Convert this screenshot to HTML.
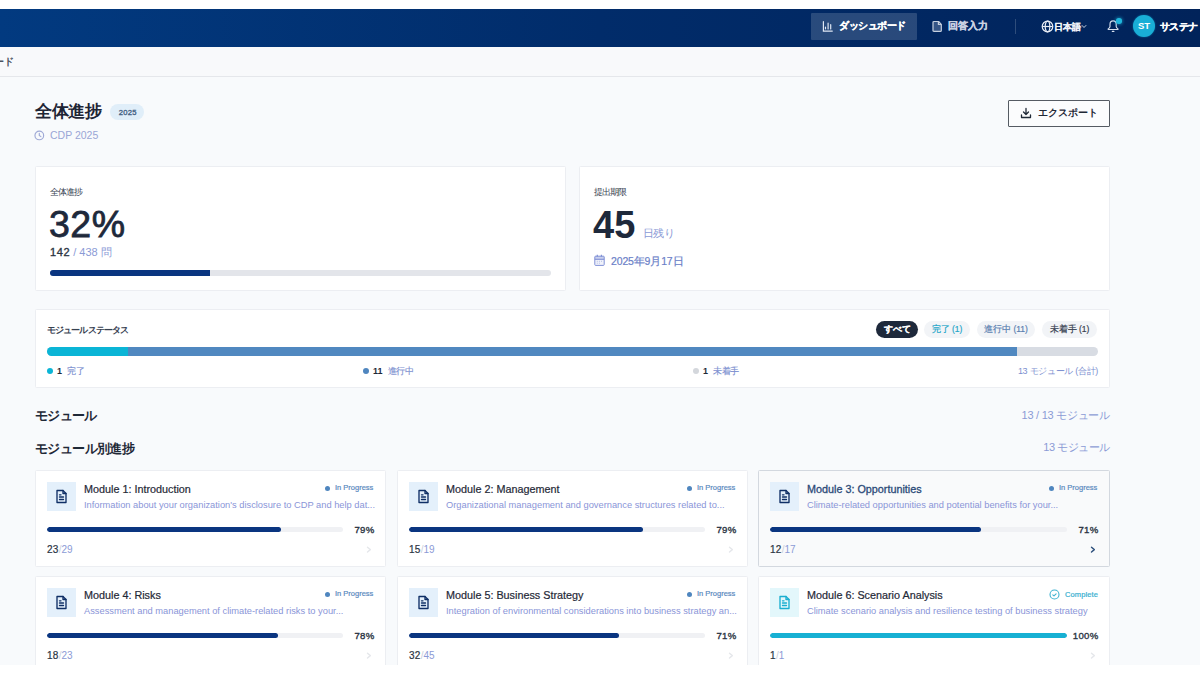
<!DOCTYPE html>
<html lang="ja">
<head>
<meta charset="utf-8">
<style>
*{box-sizing:border-box;margin:0;padding:0}
html,body{width:1200px;height:675px;overflow:hidden;background:#fff}
body{font-family:"Liberation Sans",sans-serif;position:relative;color:#1e293b}
.abs{position:absolute}
#topwhite{left:0;top:0;width:1200px;height:9px;background:#fff}
#hdr{left:0;top:9px;width:1200px;height:38px;background:linear-gradient(90deg,#023a80 0%,#012c6a 50%,#01235a 100%)}
#crumb{left:0;top:47px;width:1200px;height:30px;background:#f8f9fb;border-bottom:1px solid #e5e7eb}
#main{left:0;top:77px;width:1200px;height:588px;background:#f8fafc}
#bottomwhite{left:0;top:665px;width:1200px;height:10px;background:#fff;z-index:50}
.htxt{font-size:11px;line-height:14px;white-space:nowrap;-webkit-text-stroke:0.25px currentColor}
.pill{height:17px;border-radius:8.5px;font-size:8.5px;line-height:17px;text-align:center;font-weight:normal;-webkit-text-stroke:0.2px currentColor;white-space:nowrap}
.leg{top:365px;font-size:9px;line-height:12px;white-space:nowrap;color:#1f2937}
.leg i{display:inline-block;width:6px;height:6px;border-radius:50%;margin-right:4px;vertical-align:0.5px}
.leg span{color:#7c8fd0;margin-left:2.5px;letter-spacing:-0.3px;-webkit-text-stroke:0.15px currentColor}
.mtitle{font-size:10.8px;line-height:14px;color:#1f2937;white-space:nowrap;font-weight:normal;-webkit-text-stroke:0.2px currentColor}
.mdesc{font-size:9.3px;line-height:12px;color:#8a95d8;white-space:nowrap}
.mstat{font-size:7.5px;line-height:10px;white-space:nowrap;-webkit-text-stroke:0.2px currentColor}
.mpct{font-size:9.6px;line-height:12px;font-weight:normal;-webkit-text-stroke:0.35px #2b3443;letter-spacing:0.3px;color:#2b3443;text-align:right}
.mcount{font-size:10px;line-height:12px;white-space:nowrap}
.mcount b{color:#2b3443;font-weight:normal;-webkit-text-stroke:0.2px #2b3443;letter-spacing:0.3px}
.mcount span{color:#8b9ad6}
.mcount i{font-style:normal;color:#c9cfdc}
.card.hov{background:#f9fafb;border-color:#d3d8df}
.card{position:absolute;background:#fff;border:1px solid #eceef2;border-radius:1.5px}
</style>
</head>
<body>
<div class="abs" id="topwhite"></div>
<div class="abs" id="hdr"></div>
<div class="abs" id="crumb"></div>
<div class="abs" id="main"></div>


<!-- header -->
<div class="abs" style="left:811px;top:13px;width:106px;height:27px;background:rgba(255,255,255,0.16);border-radius:1px"></div>
<svg class="abs" style="left:821px;top:20px" width="13" height="13" viewBox="0 0 13 13" fill="none" stroke="#dfe7f3" stroke-width="1.2" stroke-linecap="round"><path d="M2.4 1.6V11.1H11.3"/><path d="M4.5 7.2V8.8M7.1 3.2V9M9.7 4.7V9"/></svg>
<div class="abs htxt" style="left:839px;top:19px;font-size:10px;letter-spacing:-0.5px;color:#fff;font-weight:bold">ダッシュボード</div>
<svg class="abs" style="left:931px;top:20px" width="12" height="13" viewBox="0 0 12 13" fill="none" stroke="#c5cfde" stroke-width="1.2" stroke-linejoin="round"><path d="M3 1.5H7.6L10.3 4.3V10.4Q10.3 11.4 9.3 11.4H3Q2 11.4 2 10.4V2.5Q2 1.5 3 1.5Z" fill="rgba(190,205,230,0.28)"/><path d="M7.4 1.6V4.5H10.2"/></svg>
<div class="abs htxt" style="left:948px;top:19px;font-size:10px;color:#c9d2e2;font-weight:bold">回答入力</div>
<div class="abs" style="left:1015px;top:19px;width:1px;height:15px;background:rgba(255,255,255,0.18)"></div>
<svg class="abs" style="left:1041px;top:20px" width="13" height="13" viewBox="0 0 13 13" fill="none" stroke="#e8edf5" stroke-width="1.2"><circle cx="6.5" cy="6.5" r="5.3"/><path d="M1.2 6.5H11.8"/><ellipse cx="6.5" cy="6.5" rx="2.3" ry="5.3"/></svg>
<div class="abs htxt" style="left:1054px;top:19.5px;font-size:8.6px;letter-spacing:0px;color:#eef2f8;font-weight:bold">日本語</div>
<svg class="abs" style="left:1081px;top:24px" width="6" height="5" viewBox="0 0 6 5" fill="none" stroke="#c5cfde" stroke-width="1"><path d="M0.8 1.2L3 3.5L5.2 1.2"/></svg>
<svg class="abs" style="left:1106px;top:18px" width="14" height="15" viewBox="0 0 14 15" fill="none" stroke="#d5deec" stroke-width="1.15" stroke-linejoin="round" stroke-linecap="round"><path d="M4 6.2C4 4 5.3 2.9 7.1 2.9C8.9 2.9 10.2 4 10.2 6.2V8.6C10.2 9.8 11.4 10.4 12 10.9C12.2 11.2 12 11.5 11.6 11.5H2.6C2.2 11.5 2 11.2 2.2 10.9C2.8 10.4 4 9.8 4 8.6Z"/><path d="M6.3 13.4H7.9"/></svg>
<div class="abs" style="left:1116px;top:18px;width:5.5px;height:5.5px;border-radius:50%;background:#1fb6dc;box-shadow:0 0 3px 1px rgba(31,182,220,0.45)"></div>
<div class="abs" style="left:1133px;top:15px;width:22px;height:22px;border-radius:50%;background:#19aed6;box-shadow:0 0 2px rgba(25,174,214,0.6);color:#fff;font-weight:bold;font-size:9.5px;line-height:22px;text-align:center">ST</div>
<div class="abs htxt" style="left:1160px;top:20px;font-size:10px;letter-spacing:-0.6px;color:#fff;font-weight:bold">サステナ</div>


<!-- breadcrumb -->
<div class="abs" style="left:-16px;top:56px;font-size:10px;line-height:12px;color:#4b5260;font-weight:bold;white-space:nowrap">ボード</div>

<!-- title -->
<div class="abs" style="left:35px;top:101px;font-size:17px;line-height:22px;letter-spacing:-0.3px;font-weight:bold;color:#1e2535;white-space:nowrap">全体進捗</div>
<div class="abs" style="left:110px;top:104px;width:34px;height:16px;border-radius:8px;background:#e0eef9;color:#456385;font-size:7.6px;font-weight:normal;-webkit-text-stroke:0.35px #456385;letter-spacing:0.3px;line-height:16px;padding:1px 0 0 1.5px;text-align:center">2025</div>
<svg class="abs" style="left:34px;top:129.5px" width="11" height="11" viewBox="0 0 11 11" fill="none" stroke="#9fa9d6" stroke-width="1.15" stroke-linecap="round"><circle cx="5.3" cy="5.4" r="4.35"/><path d="M5.3 3.2V5.5L6.9 6.6"/></svg>
<div class="abs" style="left:50px;top:128px;font-size:10.5px;line-height:14px;color:#9aa6d6;white-space:nowrap">CDP 2025</div>

<!-- export button -->
<div class="abs" style="left:1008px;top:100px;width:102px;height:27px;border:1.4px solid #555b63;border-radius:1px;background:#fbfcfd"></div>
<svg class="abs" style="left:1020px;top:107px" width="12" height="12" viewBox="0 0 12 12" fill="none" stroke="#1f2937" stroke-width="1.3" stroke-linecap="round" stroke-linejoin="round"><path d="M6 1.5V7.5M3.5 5L6 7.5L8.5 5"/><path d="M1.5 8V10.5H10.5V8"/></svg>
<div class="abs" style="left:1038px;top:106px;font-size:9.7px;line-height:14px;font-weight:bold;color:#1f2937;white-space:nowrap">エクスポート</div>

<!-- stat card 1 -->
<div class="card" style="left:35px;top:166px;width:531px;height:125px"></div>
<div class="abs" style="left:49.5px;top:185.5px;font-size:9px;line-height:12px;letter-spacing:-0.7px;color:#374151;white-space:nowrap">全体進捗</div>
<div class="abs" style="left:49px;top:204px;font-size:37.5px;line-height:40px;letter-spacing:0.5px;color:#1e293b;white-space:nowrap;-webkit-text-stroke:0.8px #1e293b">32%</div>
<div class="abs" style="left:50px;top:245px;font-size:11px;line-height:14px;white-space:nowrap"><b style="color:#2b3443;font-weight:normal;-webkit-text-stroke:0.35px #2b3443;letter-spacing:0.6px">142</b> <span style="color:#8b9ad6">/ 438 問</span></div>
<div class="abs" style="left:50px;top:270px;width:501px;height:6px;border-radius:3px;background:#e3e5ea;overflow:hidden"><div style="width:160px;height:6px;background:#0a3580"></div></div>

<!-- stat card 2 -->
<div class="card" style="left:579px;top:166px;width:531px;height:125px"></div>
<div class="abs" style="left:594px;top:185.5px;font-size:9px;line-height:12px;letter-spacing:-1px;color:#374151;white-space:nowrap">提出期限</div>
<div class="abs" style="left:593px;top:205px;font-size:38px;line-height:40px;font-weight:bold;color:#1e293b;white-space:nowrap">45</div>
<div class="abs" style="left:643px;top:226px;font-size:10.5px;letter-spacing:-0.6px;line-height:14px;color:#8b9ad6;white-space:nowrap">日残り</div>
<svg class="abs" style="left:594px;top:254px" width="11" height="12" viewBox="0 0 11 12" fill="none" stroke="#8091d6" stroke-width="1"><rect x="0.8" y="2.2" width="9.4" height="9.2" rx="0.8" fill="rgba(128,145,214,0.12)"/><rect x="0.8" y="2.2" width="9.4" height="3" fill="rgba(128,145,214,0.35)" stroke="none"/><path d="M0.8 5.3H10.2" stroke-width="1.1"/><path d="M3.3 0.7V2.8M7.4 0.7V2.8" stroke-width="1.2"/><path d="M2.8 7.3H3.8M4.9 7.3H5.9M7 7.3H8M2.8 9.2H3.8M4.9 9.2H5.9" stroke-width="0.8" stroke="#a3b0e2"/></svg>
<div class="abs" style="left:611px;top:253.5px;font-size:10.5px;letter-spacing:-0.15px;-webkit-text-stroke:0.2px currentColor;line-height:14px;color:#6b7fc8;white-space:nowrap">2025年9月17日</div>

<!-- module status card -->
<div class="card" style="left:35px;top:309px;width:1075px;height:79px"></div>
<div class="abs" style="left:47px;top:324px;font-size:9px;line-height:12px;letter-spacing:-0.9px;font-weight:bold;color:#374151;white-space:nowrap">モジュールステータス</div>
<div class="abs pill" style="left:876px;top:321px;width:42px;background:#1e293b;color:#fff;font-weight:bold">すべて</div>
<div class="abs pill" style="left:924px;top:321px;width:46px;background:#f2f4f7;color:#23a6c9">完了 (1)</div>
<div class="abs pill" style="left:977px;top:321px;width:58px;background:#f2f4f7;color:#5a7fb0">進行中 (11)</div>
<div class="abs pill" style="left:1042px;top:321px;width:55px;background:#f2f4f7;color:#374151">未着手 (1)</div>
<div class="abs" style="left:47px;top:347px;width:1051px;height:9px;border-radius:4.5px;background:#d8dce3;overflow:hidden"><div style="position:absolute;left:0;top:0;width:81px;height:9px;background:#0bb5d6"></div><div style="position:absolute;left:81px;top:0;width:889px;height:9px;background:#5088c0"></div></div>
<div class="abs leg" style="left:47px"><i style="background:#0bb5d6"></i><b>1</b> <span>完了</span></div>
<div class="abs leg" style="left:363px"><i style="background:#4f86bf"></i><b>11</b> <span>進行中</span></div>
<div class="abs leg" style="left:693px"><i style="background:#d4d7dc"></i><b>1</b> <span>未着手</span></div>
<div class="abs" style="left:900px;width:198px;top:365px;font-size:9px;letter-spacing:-0.3px;line-height:12px;color:#7c8fd0;text-align:right;white-space:nowrap">13 モジュール (合計)</div>

<!-- section headings -->
<div class="abs" style="left:35px;top:408px;font-size:12.5px;line-height:16px;letter-spacing:-0.7px;font-weight:bold;color:#1f2937;white-space:nowrap">モジュール</div>
<div class="abs" style="left:900px;width:210px;top:408px;font-size:11px;letter-spacing:-0.25px;line-height:14px;color:#8b9ad6;text-align:right;white-space:nowrap">13 / 13 モジュール</div>
<div class="abs" style="left:35px;top:441px;font-size:12.5px;line-height:16px;letter-spacing:-0.6px;font-weight:bold;color:#1f2937;white-space:nowrap">モジュール別進捗</div>
<div class="abs" style="left:900px;width:210px;top:440px;font-size:11px;letter-spacing:-0.45px;line-height:14px;color:#8b9ad6;text-align:right;white-space:nowrap">13 モジュール</div>

<div class="card mcard" style="left:35px;top:470px;width:351px;height:97px"></div>
<div class="abs" style="left:47px;top:482px;width:29px;height:29px;background:#e4f0fb"></div>
<svg class="abs" style="left:55px;top:489px" width="13" height="15" viewBox="0 0 13 15" fill="none" stroke="#0f2f66" stroke-width="1.35" stroke-linejoin="round" stroke-linecap="round"><path d="M2 1.5H8L11 4.5V13.5H2Z"/><path d="M8 1.5V4.5H11"/><path d="M4.5 8H8.5M4.5 10.5H8.5M4.5 5.8H6"/></svg>
<div class="abs mtitle" style="left:84px;top:482px;">Module 1: Introduction</div>
<div class="abs mdesc" style="left:84px;top:499px;width:290px">Information about your organization's disclosure to CDP and help dat...</div>
<div class="abs" style="left:325px;top:486px;width:5px;height:5px;border-radius:50%;background:#4f86bf"></div>
<div class="abs mstat" style="left:335px;top:483px;color:#5a8ac0">In Progress</div>
<div class="abs" style="left:47px;top:527px;width:296px;height:4.5px;border-radius:3px;background:#f0f1f4;overflow:hidden"><div style="width:234px;height:100%;border-radius:3px;background:#0a3580"></div></div>
<div class="abs mpct" style="left:326.5px;width:48px;top:523.5px">79%</div>
<div class="abs mcount" style="left:47px;top:544px"><b>23</b><i>/</i><span>29</span></div>
<svg class="abs" style="left:366px;top:546px" width="6" height="8" viewBox="0 0 6 8" fill="none" stroke="#e5e7eb" stroke-width="1.4" stroke-linecap="round" stroke-linejoin="round"><path d="M1.5 1.2L4.3 3.6L1.5 6"/></svg>

<div class="card mcard" style="left:397px;top:470px;width:351px;height:97px"></div>
<div class="abs" style="left:409px;top:482px;width:29px;height:29px;background:#e4f0fb"></div>
<svg class="abs" style="left:417px;top:489px" width="13" height="15" viewBox="0 0 13 15" fill="none" stroke="#0f2f66" stroke-width="1.35" stroke-linejoin="round" stroke-linecap="round"><path d="M2 1.5H8L11 4.5V13.5H2Z"/><path d="M8 1.5V4.5H11"/><path d="M4.5 8H8.5M4.5 10.5H8.5M4.5 5.8H6"/></svg>
<div class="abs mtitle" style="left:446px;top:482px;">Module 2: Management</div>
<div class="abs mdesc" style="left:446px;top:499px;width:290px">Organizational management and governance structures related to...</div>
<div class="abs" style="left:687px;top:486px;width:5px;height:5px;border-radius:50%;background:#4f86bf"></div>
<div class="abs mstat" style="left:697px;top:483px;color:#5a8ac0">In Progress</div>
<div class="abs" style="left:409px;top:527px;width:296px;height:4.5px;border-radius:3px;background:#f0f1f4;overflow:hidden"><div style="width:234px;height:100%;border-radius:3px;background:#0a3580"></div></div>
<div class="abs mpct" style="left:688.5px;width:48px;top:523.5px">79%</div>
<div class="abs mcount" style="left:409px;top:544px"><b>15</b><i>/</i><span>19</span></div>
<svg class="abs" style="left:728px;top:546px" width="6" height="8" viewBox="0 0 6 8" fill="none" stroke="#e5e7eb" stroke-width="1.4" stroke-linecap="round" stroke-linejoin="round"><path d="M1.5 1.2L4.3 3.6L1.5 6"/></svg>

<div class="card mcard hov" style="left:758px;top:470px;width:352px;height:97px"></div>
<div class="abs" style="left:770px;top:482px;width:29px;height:29px;background:#e4f0fb"></div>
<svg class="abs" style="left:778px;top:489px" width="13" height="15" viewBox="0 0 13 15" fill="none" stroke="#0f2f66" stroke-width="1.35" stroke-linejoin="round" stroke-linecap="round"><path d="M2 1.5H8L11 4.5V13.5H2Z"/><path d="M8 1.5V4.5H11"/><path d="M4.5 8H8.5M4.5 10.5H8.5M4.5 5.8H6"/></svg>
<div class="abs mtitle" style="left:807px;top:482px;color:#2b4a78;-webkit-text-stroke:0.3px #2b4a78">Module 3: Opportunities</div>
<div class="abs mdesc" style="left:807px;top:499px;width:291px">Climate-related opportunities and potential benefits for your...</div>
<div class="abs" style="left:1049px;top:486px;width:5px;height:5px;border-radius:50%;background:#4f86bf"></div>
<div class="abs mstat" style="left:1059px;top:483px;color:#5a8ac0">In Progress</div>
<div class="abs" style="left:770px;top:527px;width:297px;height:4.5px;border-radius:3px;background:#f0f1f4;overflow:hidden"><div style="width:211px;height:100%;border-radius:3px;background:#0a3580"></div></div>
<div class="abs mpct" style="left:1050.5px;width:48px;top:523.5px">71%</div>
<div class="abs mcount" style="left:770px;top:544px"><b>12</b><i>/</i><span>17</span></div>
<svg class="abs" style="left:1090px;top:546px" width="6" height="8" viewBox="0 0 6 8" fill="none" stroke="#2d4f7c" stroke-width="1.4" stroke-linecap="round" stroke-linejoin="round"><path d="M1.5 1.2L4.3 3.6L1.5 6"/></svg>

<div class="card mcard" style="left:35px;top:576px;width:351px;height:97px"></div>
<div class="abs" style="left:47px;top:588px;width:29px;height:29px;background:#e4f0fb"></div>
<svg class="abs" style="left:55px;top:595px" width="13" height="15" viewBox="0 0 13 15" fill="none" stroke="#0f2f66" stroke-width="1.35" stroke-linejoin="round" stroke-linecap="round"><path d="M2 1.5H8L11 4.5V13.5H2Z"/><path d="M8 1.5V4.5H11"/><path d="M4.5 8H8.5M4.5 10.5H8.5M4.5 5.8H6"/></svg>
<div class="abs mtitle" style="left:84px;top:588px;">Module 4: Risks</div>
<div class="abs mdesc" style="left:84px;top:605px;width:290px">Assessment and management of climate-related risks to your...</div>
<div class="abs" style="left:325px;top:592px;width:5px;height:5px;border-radius:50%;background:#4f86bf"></div>
<div class="abs mstat" style="left:335px;top:589px;color:#5a8ac0">In Progress</div>
<div class="abs" style="left:47px;top:633px;width:296px;height:4.5px;border-radius:3px;background:#f0f1f4;overflow:hidden"><div style="width:231px;height:100%;border-radius:3px;background:#0a3580"></div></div>
<div class="abs mpct" style="left:326.5px;width:48px;top:629.5px">78%</div>
<div class="abs mcount" style="left:47px;top:650px"><b>18</b><i>/</i><span>23</span></div>
<svg class="abs" style="left:366px;top:652px" width="6" height="8" viewBox="0 0 6 8" fill="none" stroke="#e5e7eb" stroke-width="1.4" stroke-linecap="round" stroke-linejoin="round"><path d="M1.5 1.2L4.3 3.6L1.5 6"/></svg>

<div class="card mcard" style="left:397px;top:576px;width:351px;height:97px"></div>
<div class="abs" style="left:409px;top:588px;width:29px;height:29px;background:#e4f0fb"></div>
<svg class="abs" style="left:417px;top:595px" width="13" height="15" viewBox="0 0 13 15" fill="none" stroke="#0f2f66" stroke-width="1.35" stroke-linejoin="round" stroke-linecap="round"><path d="M2 1.5H8L11 4.5V13.5H2Z"/><path d="M8 1.5V4.5H11"/><path d="M4.5 8H8.5M4.5 10.5H8.5M4.5 5.8H6"/></svg>
<div class="abs mtitle" style="left:446px;top:588px;">Module 5: Business Strategy</div>
<div class="abs mdesc" style="left:446px;top:605px;width:290px">Integration of environmental considerations into business strategy an...</div>
<div class="abs" style="left:687px;top:592px;width:5px;height:5px;border-radius:50%;background:#4f86bf"></div>
<div class="abs mstat" style="left:697px;top:589px;color:#5a8ac0">In Progress</div>
<div class="abs" style="left:409px;top:633px;width:296px;height:4.5px;border-radius:3px;background:#f0f1f4;overflow:hidden"><div style="width:210px;height:100%;border-radius:3px;background:#0a3580"></div></div>
<div class="abs mpct" style="left:688.5px;width:48px;top:629.5px">71%</div>
<div class="abs mcount" style="left:409px;top:650px"><b>32</b><i>/</i><span>45</span></div>
<svg class="abs" style="left:728px;top:652px" width="6" height="8" viewBox="0 0 6 8" fill="none" stroke="#e5e7eb" stroke-width="1.4" stroke-linecap="round" stroke-linejoin="round"><path d="M1.5 1.2L4.3 3.6L1.5 6"/></svg>

<div class="card mcard" style="left:758px;top:576px;width:352px;height:97px"></div>
<div class="abs" style="left:770px;top:588px;width:29px;height:29px;background:#e3f7fb"></div>
<svg class="abs" style="left:778px;top:595px" width="13" height="15" viewBox="0 0 13 15" fill="none" stroke="#1aaed0" stroke-width="1.35" stroke-linejoin="round" stroke-linecap="round"><path d="M2 1.5H8L11 4.5V13.5H2Z"/><path d="M8 1.5V4.5H11"/><path d="M4.5 8H8.5M4.5 10.5H8.5M4.5 5.8H6"/></svg>
<div class="abs mtitle" style="left:807px;top:588px;">Module 6: Scenario Analysis</div>
<div class="abs mdesc" style="left:807px;top:605px;width:291px">Climate scenario analysis and resilience testing of business strategy</div>
<svg class="abs" style="left:1049px;top:589px" width="11" height="11" viewBox="0 0 11 11" fill="none" stroke="#3eb2d1" stroke-width="1.1"><circle cx="5.5" cy="5.5" r="4.5"/><path d="M3.8 5.8L5 6.9L7.1 4.8" stroke-linecap="round" stroke-linejoin="round"/></svg>
<div class="abs mstat" style="left:1065px;top:589.5px;color:#38b0d0;letter-spacing:0.1px">Complete</div>
<div class="abs" style="left:770px;top:633px;width:297px;height:4.5px;border-radius:3px;background:#f0f1f4;overflow:hidden"><div style="width:297px;height:100%;border-radius:3px;background:#17b0d3"></div></div>
<div class="abs mpct" style="left:1050.5px;width:48px;top:629.5px">100%</div>
<div class="abs mcount" style="left:770px;top:650px"><b>1</b><i>/</i><span>1</span></div>
<svg class="abs" style="left:1090px;top:652px" width="6" height="8" viewBox="0 0 6 8" fill="none" stroke="#e5e7eb" stroke-width="1.4" stroke-linecap="round" stroke-linejoin="round"><path d="M1.5 1.2L4.3 3.6L1.5 6"/></svg>

<div class="abs" id="bottomwhite"></div>
</body>
</html>
